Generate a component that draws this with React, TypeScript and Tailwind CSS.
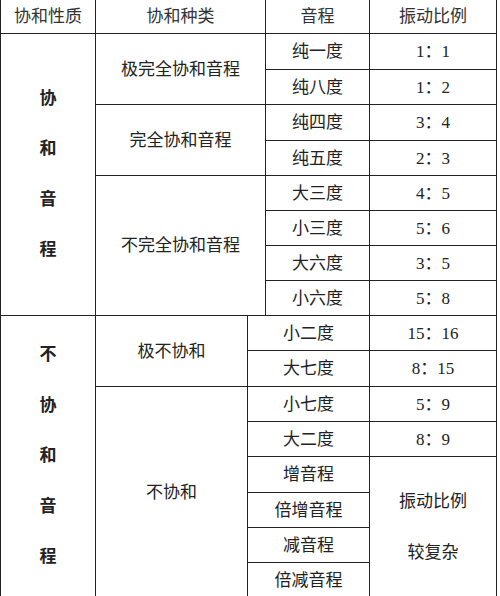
const cjk = { fontFamily: '"Liberation Serif", "Noto Sans CJK SC", serif' };

const Cell = (props: { className?: string; children?: React.ReactNode }) => (
  <div
    className={`bg-white flex flex-col items-center justify-center text-[17px] leading-[17px] text-[#222] ${props.className ?? ""}`}
  >
    {props.children}
  </div>
);

const Vertical = (props: { text: string }) => (
  <div className="flex flex-col items-center font-bold">
    {props.text.split("").map((c, i) => (
      <span key={i} className="leading-[50.5px]">
        {c}
      </span>
    ))}
  </div>
);

export default function App() {
  return (
    <div className="h-[596px] w-[500px] overflow-hidden bg-white" style={cjk}>
      <div className="grid w-[497px] grid-cols-[94px_151px_17px_103px_126px] grid-rows-[33px_35px_34px_35px_34px_34px_34px_34px_34px_34px_35px_34px_34px_35px_34px_34px_34px] gap-px bg-[#222] px-px pb-px">
        {/* header */}
        <Cell className="col-start-1 row-start-1 text-[#333]">协和性质</Cell>
        <Cell className="col-start-2 col-span-2 row-start-1 text-[#333]">协和种类</Cell>
        <Cell className="col-start-4 row-start-1 text-[#333]">音程</Cell>
        <Cell className="col-start-5 row-start-1 text-[#333]">振动比例</Cell>

        {/* 协和音程 */}
        <Cell className="col-start-1 row-start-2 row-span-8">
          <Vertical text="协和音程" />
        </Cell>
        <Cell className="col-start-2 col-span-2 row-start-2 row-span-2">极完全协和音程</Cell>
        <Cell className="col-start-2 col-span-2 row-start-4 row-span-2">完全协和音程</Cell>
        <Cell className="col-start-2 col-span-2 row-start-6 row-span-4">不完全协和音程</Cell>

        <Cell className="col-start-4 row-start-2">纯一度</Cell>
        <Cell className="col-start-5 row-start-2">1：1</Cell>
        <Cell className="col-start-4 row-start-3">纯八度</Cell>
        <Cell className="col-start-5 row-start-3">1：2</Cell>
        <Cell className="col-start-4 row-start-4">纯四度</Cell>
        <Cell className="col-start-5 row-start-4">3：4</Cell>
        <Cell className="col-start-4 row-start-5">纯五度</Cell>
        <Cell className="col-start-5 row-start-5">2：3</Cell>
        <Cell className="col-start-4 row-start-6">大三度</Cell>
        <Cell className="col-start-5 row-start-6">4：5</Cell>
        <Cell className="col-start-4 row-start-7">小三度</Cell>
        <Cell className="col-start-5 row-start-7">5：6</Cell>
        <Cell className="col-start-4 row-start-8">大六度</Cell>
        <Cell className="col-start-5 row-start-8">3：5</Cell>
        <Cell className="col-start-4 row-start-9">小六度</Cell>
        <Cell className="col-start-5 row-start-9">5：8</Cell>

        {/* 不协和音程 */}
        <Cell className="col-start-1 row-start-10 row-span-8">
          <Vertical text="不协和音程" />
        </Cell>
        <Cell className="col-start-2 row-start-10 row-span-2">极不协和</Cell>
        <Cell className="col-start-2 row-start-12 row-span-6">不协和</Cell>

        <Cell className="col-start-3 col-span-2 row-start-10">小二度</Cell>
        <Cell className="col-start-5 row-start-10">15：16</Cell>
        <Cell className="col-start-3 col-span-2 row-start-11">大七度</Cell>
        <Cell className="col-start-5 row-start-11">8：15</Cell>
        <Cell className="col-start-3 col-span-2 row-start-12">小七度</Cell>
        <Cell className="col-start-5 row-start-12">5：9</Cell>
        <Cell className="col-start-3 col-span-2 row-start-13">大二度</Cell>
        <Cell className="col-start-5 row-start-13">8：9</Cell>
        <Cell className="col-start-3 col-span-2 row-start-14">增音程</Cell>
        <Cell className="col-start-3 col-span-2 row-start-15">倍增音程</Cell>
        <Cell className="col-start-3 col-span-2 row-start-16">减音程</Cell>
        <Cell className="col-start-3 col-span-2 row-start-17">倍减音程</Cell>
        <Cell className="col-start-5 row-start-14 row-span-4 gap-[34px]">
          <span>振动比例</span>
          <span>较复杂</span>
        </Cell>
      </div>
    </div>
  );
}
